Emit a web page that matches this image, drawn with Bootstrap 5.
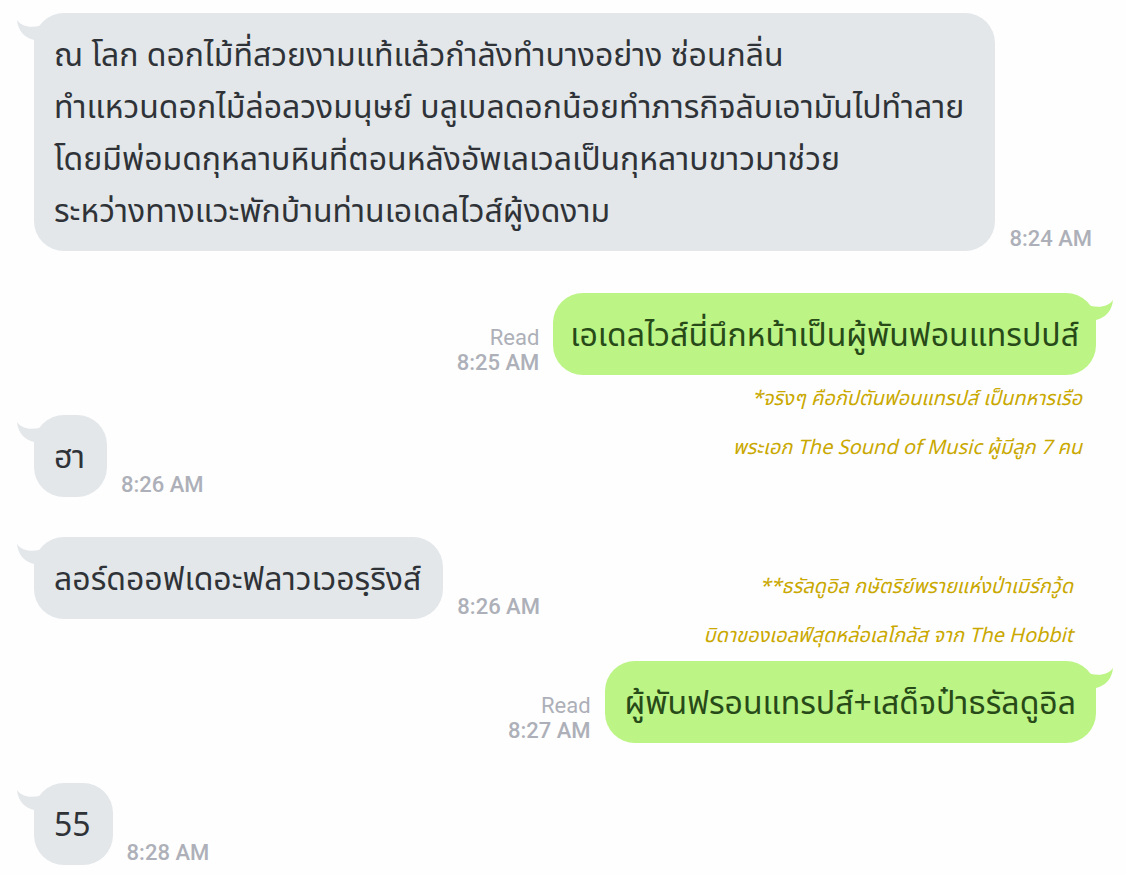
<!DOCTYPE html>
<html lang="th">
<head>
<meta charset="utf-8">
<meta name="viewport" content="width=device-width, initial-scale=1">
<title>Chat</title>
<link href="https://cdn.jsdelivr.net/npm/bootstrap@5.3.0/dist/css/bootstrap.min.css" rel="stylesheet">
<style>
  body { background: #fefefe; font-family: "Noto Sans Thai", "Noto Sans", sans-serif; }
  .chat { padding: 13px 31px 10px 34px; }
  .turn { gap: 14px; }
  .turn-spaced { margin-top: 42px; }
  .turn-last { margin-top: 40px; }
  .bubble { position: relative; border-radius: 30px; padding: 17px 22px 13px 20px; font-size: 32px; line-height: 52px; }
  .bubble-in { background: #e3e7ea; color: #2f3338; }
  .bubble-out { background: #bcf486; color: #274a18; padding-right: 20px; }
  .bubble-long { padding-right: 31px; }
  .bubble-tight { padding-left: 17px; padding-right: 17px; }
  .tail { position: absolute; top: 6px; width: 30px; height: 24px; fill: #e3e7ea; }
  .bubble-in .tail { left: -18px; }
  .bubble-out .tail { right: -18px; transform: scaleX(-1); fill: #bcf486; }
  .stamp { font-family: Roboto, sans-serif; font-size: 22px; line-height: 25px; color: #adb0b8; white-space: nowrap; }
  .stamp time { font-weight: 500; }
  .note { font-style: italic; font-size: 20px; line-height: 49px; color: #c9a800; text-align: right; }
  .note-first { padding-right: 14px; }
  .note-second { padding-right: 23px; }
  .exchange { padding: 40px 0 42px; gap: 40px; }
</style>
</head>
<body>
<main class="chat d-flex flex-column">
  <div class="turn d-flex align-items-end">
    <div class="bubble bubble-in bubble-long">
      <svg class="tail" viewBox="0 0 30 24" aria-hidden="true"><path d="M1 1C5 7 13 9 23 7L30 2V24H18V21C9 19 2 12 1 1Z"/></svg>
      ณ โลก ดอกไม้ที่สวยงามแท้แล้วกำลังทำบางอย่าง ซ่อนกลิ่น<br>ทำแหวนดอกไม้ล่อลวงมนุษย์ บลูเบลดอกน้อยทำภารกิจลับเอามันไปทำลาย<br>โดยมีพ่อมดกุหลาบหินที่ตอนหลังอัพเลเวลเป็นกุหลาบขาวมาช่วย<br>ระหว่างทางแวะพักบ้านท่านเอเดลไวส์ผู้งดงาม
    </div>
    <div class="stamp"><time>8:24 AM</time></div>
  </div>

  <div class="turn turn-spaced d-flex align-items-end justify-content-end">
    <div class="stamp text-end">Read<br><time>8:25 AM</time></div>
    <div class="bubble bubble-out bubble-tight">
      <svg class="tail" viewBox="0 0 30 24" aria-hidden="true"><path d="M1 1C5 7 13 9 23 7L30 2V24H18V21C9 19 2 12 1 1Z"/></svg>
      เอเดลไวส์นี่นึกหน้าเป็นผู้พันฟอนแทรปปส์
    </div>
  </div>

  <div class="d-flex justify-content-between">
    <div class="exchange d-flex flex-column">
      <div class="turn d-flex align-items-end">
        <div class="bubble bubble-in">
          <svg class="tail" viewBox="0 0 30 24" aria-hidden="true"><path d="M1 1C5 7 13 9 23 7L30 2V24H18V21C9 19 2 12 1 1Z"/></svg>
          ฮา
        </div>
        <div class="stamp"><time>8:26 AM</time></div>
      </div>
      <div class="turn d-flex align-items-end">
        <div class="bubble bubble-in">
          <svg class="tail" viewBox="0 0 30 24" aria-hidden="true"><path d="M1 1C5 7 13 9 23 7L30 2V24H18V21C9 19 2 12 1 1Z"/></svg>
          ลอร์ดออฟเดอะฟลาวเวอรฺริงส์
        </div>
        <div class="stamp"><time>8:26 AM</time></div>
      </div>
    </div>
    <div class="d-flex flex-column justify-content-between">
      <p class="note note-first mb-0">*จริงๆ คือกัปตันฟอนแทรปส์ เป็นทหารเรือ<br>พระเอก The Sound of Music ผู้มีลูก 7 คน</p>
      <p class="note note-second mb-0">**ธรัลดูอิล กษัตริย์พรายแห่งป่าเมิร์กวู้ด<br>บิดาของเอลฟ์สุดหล่อเลโกลัส จาก The Hobbit</p>
    </div>
  </div>

  <div class="turn d-flex align-items-end justify-content-end">
    <div class="stamp text-end">Read<br><time>8:27 AM</time></div>
    <div class="bubble bubble-out">
      <svg class="tail" viewBox="0 0 30 24" aria-hidden="true"><path d="M1 1C5 7 13 9 23 7L30 2V24H18V21C9 19 2 12 1 1Z"/></svg>
      ผู้พันฟรอนแทรปส์+เสด็จป๋าธรัลดูอิล
    </div>
  </div>

  <div class="turn turn-last d-flex align-items-end">
    <div class="bubble bubble-in">
      <svg class="tail" viewBox="0 0 30 24" aria-hidden="true"><path d="M1 1C5 7 13 9 23 7L30 2V24H18V21C9 19 2 12 1 1Z"/></svg>
      55
    </div>
    <div class="stamp"><time>8:28 AM</time></div>
  </div>
</main>
<script src="https://cdn.jsdelivr.net/npm/bootstrap@5.3.0/dist/js/bootstrap.bundle.min.js"></script>
</body>
</html>
